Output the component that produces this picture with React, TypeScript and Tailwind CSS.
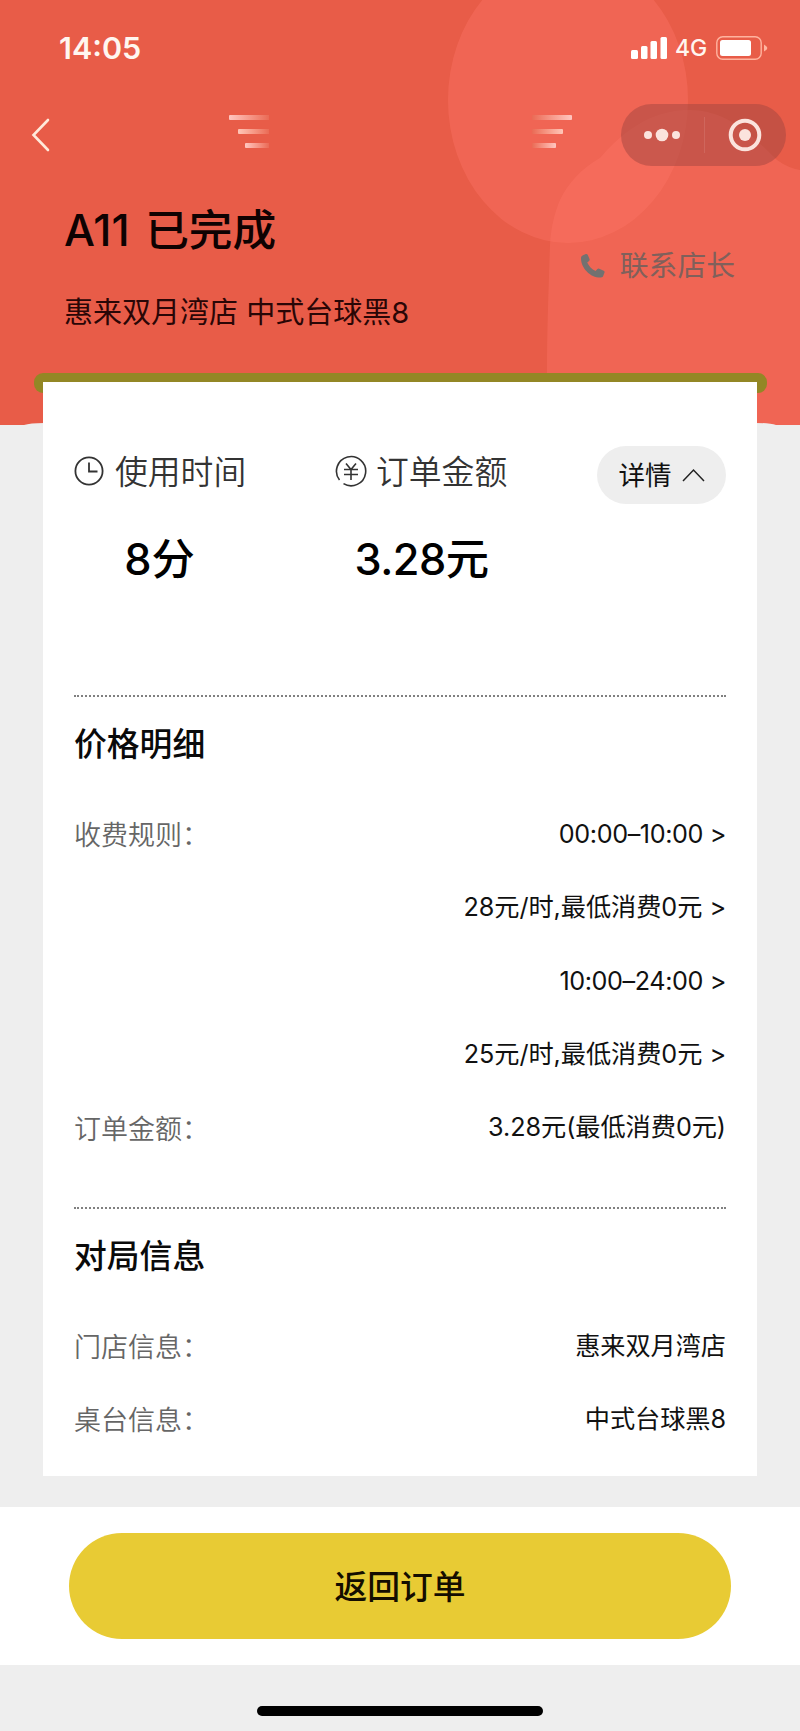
interface Regla {
  label?: string;
  value: string;
}

const precios: Regla[] = [
  { label: "收费规则", value: "00:00–10:00 >" },
  { value: "28元/时,最低消费0元 >" },
  { value: "10:00–24:00 >" },
  { value: "25元/时,最低消费0元 >" },
  { label: "订单金额", value: "3.28元(最低消费0元)" },
];

const partida: Regla[] = [
  { label: "门店信息", value: "惠来双月湾店" },
  { label: "桌台信息", value: "中式台球黑8" },
];

function HeaderShapes() {
  return (
    <svg className="absolute inset-0" width="800" height="425" viewBox="0 0 800 425">
      <g fill="#ff7868" fillOpacity="0.36">
        <ellipse cx="568" cy="100" rx="120" ry="143" />
        <path d="M547 425V372C547 325 549 280 550 245C551 226 555 212 560 200C568 183 582 168 600 158C620 135 648 110 690 110C728 110 755 138 777 160Q788 168 800 170V425Z" />
      </g>
      <path d="M24 425Q30 423 44 423V425ZM756 423Q770 423 776 425H756Z" fill="#eee" />
    </svg>
  );
}

function StatusBar() {
  return (
    <div className="relative flex h-[96px] items-center justify-between pl-[59px] pr-[32px] text-[#fff6f0]">
      <span className="text-[30.5px] font-semibold leading-none">14:05</span>
      <div className="flex items-center">
        <svg width="37" height="24" viewBox="0 0 37 24" fill="#fff">
          <rect x="0" y="14" width="7" height="9" rx="1.5" />
          <rect x="10" y="10" width="6.5" height="13" rx="1.5" />
          <rect x="19.5" y="5" width="6.5" height="18" rx="1.5" />
          <rect x="29.5" y="1" width="6.5" height="22" rx="1.5" />
        </svg>
        <span className="ml-[7px] w-[32px] text-[23px] font-medium leading-none">4G</span>
        <svg className="ml-[9px]" width="52" height="24" viewBox="0 0 52 24">
          <rect x="0.8" y="0.8" width="44.4" height="22.4" rx="6" fill="none" stroke="#ffb39f" strokeWidth="1.4" />
          <rect x="4" y="4" width="31" height="16" rx="2.5" fill="#fff" />
          <path d="M48 8.5Q51.4 10.5 51.4 12T48 15.5Z" fill="#ffb5a0" />
        </svg>
      </div>
    </div>
  );
}

function Stripes({ flip }: { flip?: boolean }) {
  return (
    <div className={flip ? "flex -scale-x-100 flex-col items-end gap-[9px]" : "flex flex-col items-end gap-[9px]"}>
      <div className="h-[5px] w-[40px] rounded-l-[1px] bg-linear-to-r from-[#ffc6c0] to-[#ea6a55]" />
      <div className="h-[5px] w-[31px] rounded-l-[1px] bg-linear-to-r from-[#ffc6b8] to-[#ea6a55]" />
      <div className="h-[5px] w-[24px] rounded-l-[1px] bg-linear-to-r from-[#ffc6c0] to-[#ea6a55]" />
    </div>
  );
}

function NavBar() {
  return (
    <div className="relative mt-[8px] flex h-[62px] items-center pl-[31px]">
      <svg width="19" height="34" viewBox="0 0 19 34" fill="none" stroke="#ffeadb" strokeWidth="2.6" strokeLinecap="round">
        <path d="M17 2L2.5 17L17 32" />
      </svg>
      <div className="ml-[179px] mb-[7px]">
        <Stripes />
      </div>
      <div className="ml-[263px] mb-[7px]">
        <Stripes flip />
      </div>
      <div className="ml-[49px] h-[62px] w-[165px] rounded-full bg-[#a14640]/50">
        <svg width="165" height="62" viewBox="0 0 165 62" fill="#fbe3dd">
          <circle cx="27" cy="31" r="4" />
          <circle cx="41" cy="31" r="6.3" />
          <circle cx="55" cy="31" r="4" />
          <rect x="83" y="13" width="1" height="36" fillOpacity="0.12" />
          <circle cx="124" cy="31" r="14.3" fill="none" stroke="#fbe3dd" strokeWidth="4" />
          <circle cx="124" cy="31" r="6" />
        </svg>
      </div>
    </div>
  );
}

function Header() {
  return (
    <div className="relative h-[425px] bg-[#e85c48]">
      <HeaderShapes />
      <StatusBar />
      <NavBar />
      <div className="relative flex justify-between pl-[64px] pr-[65px] pt-[35px]">
        <div>
          <h1 className="text-[43.7px] font-medium leading-[60px] text-[#0f0202] [word-spacing:4px]">A11 已完成</h1>
          <p className="mt-[32px] text-[29px] leading-[40px] text-[#2a0606]">惠来双月湾店 中式台球黑8</p>
        </div>
        <div className="mt-[45px] flex h-[40px] items-center text-[28.8px] text-[#80605b]">
          <svg className="mr-[14px]" width="26" height="26" viewBox="0 0 26 26" fill="#737170">
            <path d="M3 2.2L5.8 1C6.6.7 7.3 1 7.7 1.8L9.5 6.1C9.8 6.8 9.6 7.4 9.1 7.9L7.2 9.6C8.8 13.2 11.7 16.2 15.6 18.1L17.4 16.1C17.9 15.5 18.5 15.4 19.2 15.7L23.7 17.8C24.4 18.1 24.8 18.8 24.5 19.6L23.4 22.6C23.1 23.7 22.2 24.5 21 24.6C10.5 25 .8 15 1 4.9C1.1 3.6 1.8 2.7 3 2.2Z" />
          </svg>
          联系店长
        </div>
      </div>
    </div>
  );
}

function ClockIcon() {
  return (
    <svg width="30" height="30" viewBox="0 0 30 30" fill="none" stroke="#333" strokeWidth="1.8">
      <circle cx="15" cy="15" r="13.6" />
      <path d="M15 6.5V15.5H23.5" />
    </svg>
  );
}

function YenIcon() {
  return (
    <svg width="32" height="32" viewBox="0 0 32 32" fill="none" stroke="#333" strokeWidth="1.6">
      <path d="M4.5 25A14.6 14.6 0 1 1 8.5 28.6" />
      <path d="M11 8.5L16 14.5L21 8.5M9 14.5H23M9 19.5H23M16 14.5V25" />
    </svg>
  );
}

function Resumen() {
  return (
    <div className="flex h-[249px] justify-between">
      <div className="grid grid-cols-[261px_auto] grid-rows-[50px_auto] text-[32.8px] font-[350] text-[#333]">
        <div className="flex items-center gap-[11px]">
          <ClockIcon />
          <span className="pt-[3px]">使用时间</span>
        </div>
        <div className="flex items-center gap-[9px]">
          <YenIcon />
          <span className="pt-[3px]">订单金额</span>
        </div>
        <p className="mt-[33px] w-[171px] text-center text-[43.3px] font-medium leading-[60px] text-black">8分</p>
        <p className="mt-[33px] w-[173px] text-center text-[43.3px] font-medium leading-[60px] tracking-[-0.5px] text-black">3.28元</p>
      </div>
      <button className="flex h-[58px] w-[129px] items-center justify-center gap-[10px] rounded-full bg-[#eee] text-[26.5px] text-[#111]">
        <span className="pt-[2px]">详情</span>
        <svg width="23" height="14" viewBox="0 0 23 14" fill="none" stroke="#222" strokeWidth="1.5">
          <path d="M1 13L11.5 2L22 13" />
        </svg>
      </button>
    </div>
  );
}

function Seccion({ title, rows }: { title: string; rows: Regla[] }) {
  return (
    <section className="border-t-2 border-dotted border-[#808080]">
      <h2 className="mt-[22px] text-[32.8px] font-medium leading-[50px] text-[#0a0a0a]">{title}</h2>
      <div className="mt-[28px]">
        {rows.map((r, i) => (
          <div key={i} className="flex h-[73.4px] items-center justify-between">
            <span className="pt-[5px] text-[27px] font-[350] text-[#666]">{r.label ? `${r.label}：` : ""}</span>
            <span
              className={
                /元|店|黑/.test(r.value)
                  ? "pt-[2px] text-[25.2px] tracking-[-0.05px] text-[#111]"
                  : "pt-[2px] text-[25.2px] tracking-[-0.4px] text-[#111]"
              }
            >
              {r.value}
            </span>
          </div>
        ))}
      </div>
    </section>
  );
}

export default function App() {
  return (
    <div className="h-[1731px] w-[800px] overflow-hidden bg-[#eee] font-['Inter','Noto_Sans_CJK_SC',sans-serif]">
      <Header />
      {/* ranura por donde sale el ticket */}
      <div className="relative ml-[34px] mr-[33px] -mt-[52px] h-[20px] rounded-[9px] bg-[#938725]" />
      <main className="relative mx-[43px] -mt-[11px] h-[1094px] bg-white px-[31px] pt-[64px]">
        <Resumen />
        <Seccion title="价格明细" rows={precios} />
        <div className="h-[43px]" />
        <Seccion title="对局信息" rows={partida} />
      </main>
      <footer className="mt-[31px] h-[158px] bg-white px-[69px] pt-[26px]">
        <button className="h-[106px] w-full rounded-full bg-[#e8cb34] pt-[3px] text-[32.8px] font-medium text-[#140d00]">返回订单</button>
      </footer>
      <div className="mx-auto mt-[41px] h-[10px] w-[286px] rounded-full bg-black" />
    </div>
  );
}
